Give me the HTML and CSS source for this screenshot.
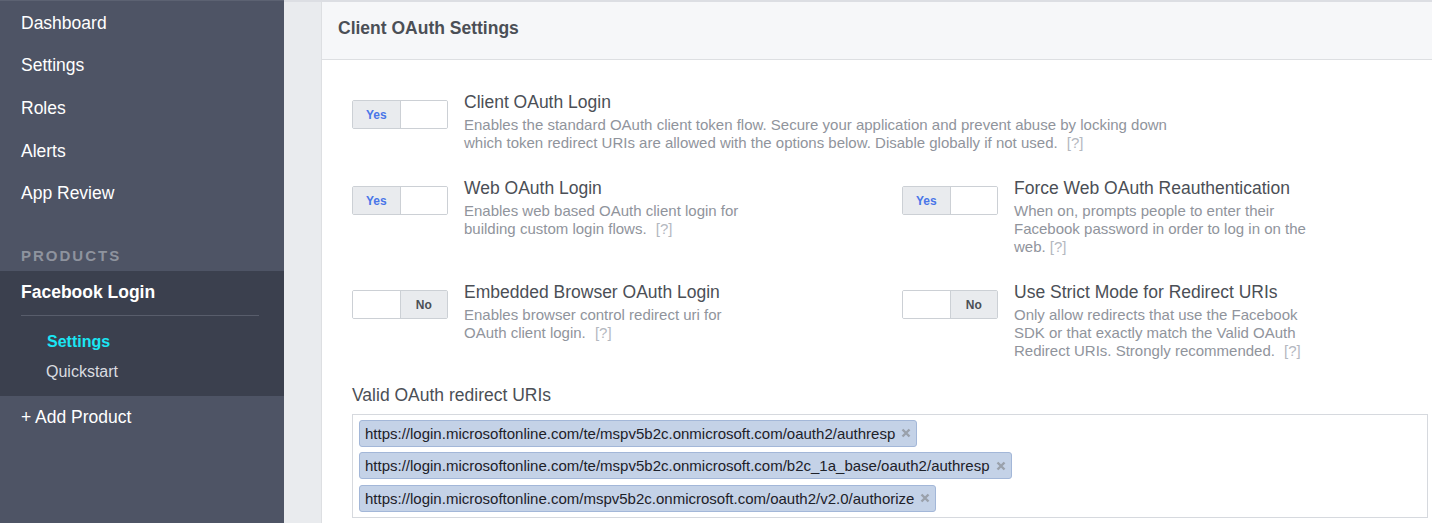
FILE: index.html
```html
<!DOCTYPE html>
<html lang="en">
<head>
<meta charset="utf-8">
<title>Client OAuth Settings</title>
<link rel="stylesheet" href="styles.css">
</head>
<body>
<div class="app">
  <nav class="sidebar">
    <ul class="nav">
      <li class="nav-item">Dashboard</li>
      <li class="nav-item">Settings</li>
      <li class="nav-item">Roles</li>
      <li class="nav-item">Alerts</li>
      <li class="nav-item">App Review</li>
    </ul>
    <div class="section-label">PRODUCTS</div>
    <div class="product active">
      <div class="product-name">Facebook Login</div>
      <div class="product-divider"></div>
      <ul class="subnav">
        <li class="sub-item current">Settings</li>
        <li class="sub-item">Quickstart</li>
      </ul>
    </div>
    <div class="add-product">+ Add Product</div>
  </nav>

  <main class="main">
    <section class="card">
      <header class="card-header">
        <h2 class="card-title">Client OAuth Settings</h2>
      </header>
      <div class="card-body">
        <div class="settings-grid">
          <div class="setting wide">
            <div class="toggle on"><span class="seg seg-yes">Yes</span><span class="seg seg-blank"></span></div>
            <div class="setting-text">
              <div class="setting-title">Client OAuth Login</div>
              <p class="setting-desc">Enables the standard OAuth client token flow. Secure your application and prevent abuse by locking down which token redirect URIs are allowed with the options below. Disable globally if not used. <span class="help">[?]</span></p>
            </div>
          </div>

          <div class="setting">
            <div class="toggle on"><span class="seg seg-yes">Yes</span><span class="seg seg-blank"></span></div>
            <div class="setting-text">
              <div class="setting-title">Web OAuth Login</div>
              <p class="setting-desc">Enables web based OAuth client login for building custom login flows. <span class="help">[?]</span></p>
            </div>
          </div>

          <div class="setting">
            <div class="toggle on"><span class="seg seg-yes">Yes</span><span class="seg seg-blank"></span></div>
            <div class="setting-text">
              <div class="setting-title">Force Web OAuth Reauthentication</div>
              <p class="setting-desc">When on, prompts people to enter their Facebook password in order to log in on the web. <span class="help tight">[?]</span></p>
            </div>
          </div>

          <div class="setting">
            <div class="toggle off"><span class="seg seg-blank"></span><span class="seg seg-no">No</span></div>
            <div class="setting-text">
              <div class="setting-title">Embedded Browser OAuth Login</div>
              <p class="setting-desc">Enables browser control redirect uri for OAuth client login. <span class="help">[?]</span></p>
            </div>
          </div>

          <div class="setting">
            <div class="toggle off"><span class="seg seg-blank"></span><span class="seg seg-no">No</span></div>
            <div class="setting-text">
              <div class="setting-title">Use Strict Mode for Redirect URIs</div>
              <p class="setting-desc">Only allow redirects that use the Facebook SDK or that exactly match the Valid OAuth Redirect URIs. Strongly recommended. <span class="help">[?]</span></p>
            </div>
          </div>
        </div>

        <div class="field">
          <div class="field-label">Valid OAuth redirect URIs</div>
          <div class="token-box">
            <span class="token">https://login.microsoftonline.com/te/mspv5b2c.onmicrosoft.com/oauth2/authresp<svg class="token-x" viewBox="0 0 10 10" width="10" height="10"><path d="M1.5 1.5 L8.5 8.5 M8.5 1.5 L1.5 8.5"/></svg></span>
            <span class="token">https://login.microsoftonline.com/te/mspv5b2c.onmicrosoft.com/b2c_1a_base/oauth2/authresp<svg class="token-x" viewBox="0 0 10 10" width="10" height="10"><path d="M1.5 1.5 L8.5 8.5 M8.5 1.5 L1.5 8.5"/></svg></span>
            <span class="token">https://login.microsoftonline.com/mspv5b2c.onmicrosoft.com/oauth2/v2.0/authorize<svg class="token-x" viewBox="0 0 10 10" width="10" height="10"><path d="M1.5 1.5 L8.5 8.5 M8.5 1.5 L1.5 8.5"/></svg></span>
          </div>
        </div>
      </div>
    </section>
  </main>
</div>
</body>
</html>
```

FILE: styles.css
```css
* { box-sizing: border-box; }

html, body {
  margin: 0;
  padding: 0;
  height: 523px;
  overflow: hidden;
  font-family: "Liberation Sans", Arial, sans-serif;
}

.app {
  display: flex;
  height: 523px;
  overflow: hidden;
}

/* ---------- Sidebar ---------- */
.sidebar {
  width: 284px;
  flex-shrink: 0;
  background: #4e5465;
  border-top: 1px solid #5c6272;
  padding-top: 1px;
  color: #fff;
}

.nav, .subnav {
  list-style: none;
  margin: 0;
  padding: 0;
}

.nav-item {
  height: 42.6px;
  display: flex;
  align-items: center;
  padding-left: 21px;
  font-size: 17.5px;
  line-height: 21px;
  color: #fff;
}

.section-label {
  margin-top: 32px;
  margin-bottom: 6.5px;
  padding-left: 21px;
  font-size: 15px;
  line-height: 18px;
  font-weight: bold;
  letter-spacing: 2px;
  color: #8e939e;
}

.product.active {
  background: #3b404e;
  padding: 11px 0 14px;
}

.product-name {
  padding-left: 21px;
  font-size: 17.5px;
  line-height: 21px;
  font-weight: bold;
  color: #fff;
}

.product-divider {
  margin: 11.5px 25px 0 21px;
  height: 1px;
  background: #585d6b;
}

.subnav {
  margin-top: 16px;
  display: flex;
  flex-direction: column;
  gap: 10px;
}

.sub-item {
  padding-left: 46px;
  font-size: 16px;
  line-height: 20px;
  color: #dadce0;
}

.sub-item.current {
  padding-left: 47px;
  font-weight: bold;
  color: #1ae6f3;
}

.add-product {
  margin-top: 11px;
  padding-left: 21px;
  font-size: 17.5px;
  line-height: 21px;
  color: #fff;
}

/* ---------- Main ---------- */
.main {
  flex: 1;
  background: #e9ebee;
  border-top: 2px solid #dcdee3;
  padding-left: 37px;
  overflow: hidden;
}

.card {
  width: 1137px;
  height: 600px;
  background: #fff;
  border-left: 1px solid #dddfe2;
}

.card-header {
  height: 58px;
  background: #f6f7f9;
  border-bottom: 1px solid #dddfe2;
  display: flex;
  align-items: center;
  padding: 0 0 4px 16px;
}

.card-title {
  margin: 0;
  font-size: 17.5px;
  line-height: 21px;
  font-weight: bold;
  color: #4b4f56;
}

.card-body {
  padding: 31px 30px 0 30px;
}

.settings-grid {
  display: grid;
  grid-template-columns: 550px 550px;
  row-gap: 25px;
}

.setting {
  display: flex;
  align-items: flex-start;
  gap: 16px;
}

.setting.wide {
  grid-column: 1 / span 2;
}

.toggle {
  width: 96px;
  height: 29px;
  margin-top: 9px;
  flex-shrink: 0;
  display: flex;
  border: 1px solid #ccd0d5;
  border-radius: 2px;
  overflow: hidden;
  background: #fff;
}

.seg {
  flex: 1;
  display: flex;
  align-items: center;
  justify-content: center;
  font-size: 12px;
  font-weight: bold;
}

.seg-yes {
  background: #e9ebee;
  color: #4a76e8;
  border-right: 1px solid #ccd0d5;
}

.seg-no {
  background: #e9ebee;
  color: #4b4f56;
  border-left: 1px solid #ccd0d5;
}

.seg-blank {
  background: #fff;
}

.setting-title {
  margin-top: 1px;
  font-size: 17.5px;
  line-height: 21px;
  color: #4b4f56;
}

.setting-desc {
  margin: 3px 0 0 0;
  max-width: 298px;
  font-size: 15px;
  line-height: 18px;
  color: #90949c;
}

.setting.wide .setting-desc {
  max-width: 720px;
}

.help {
  margin-left: 5px;
  color: #b4b8bf;
}

.help.tight {
  margin-left: 0;
}

/* ---------- Redirect URIs field ---------- */
.field {
  margin-top: 25px;
}

.field-label {
  font-size: 17.5px;
  line-height: 21px;
  color: #4b4f56;
}

.token-box {
  margin-top: 7.5px;
  width: 1076px;
  border: 1px solid #d6d9de;
  padding: 5px 6px 5px 6px;
  display: flex;
  flex-wrap: wrap;
  row-gap: 5.5px;
  column-gap: 6px;
}

.token {
  height: 27px;
  display: inline-flex;
  align-items: center;
  padding: 0 5px 0 5px;
  background: #c4d2e7;
  border: 1px solid #a3b7d8;
  border-radius: 3px;
  font-size: 15px;
  color: #1d2129;
  white-space: nowrap;
}

.token-x {
  margin-left: 6px;
  stroke: #9aa1ab;
  stroke-width: 2.4;
  fill: none;
}
```
